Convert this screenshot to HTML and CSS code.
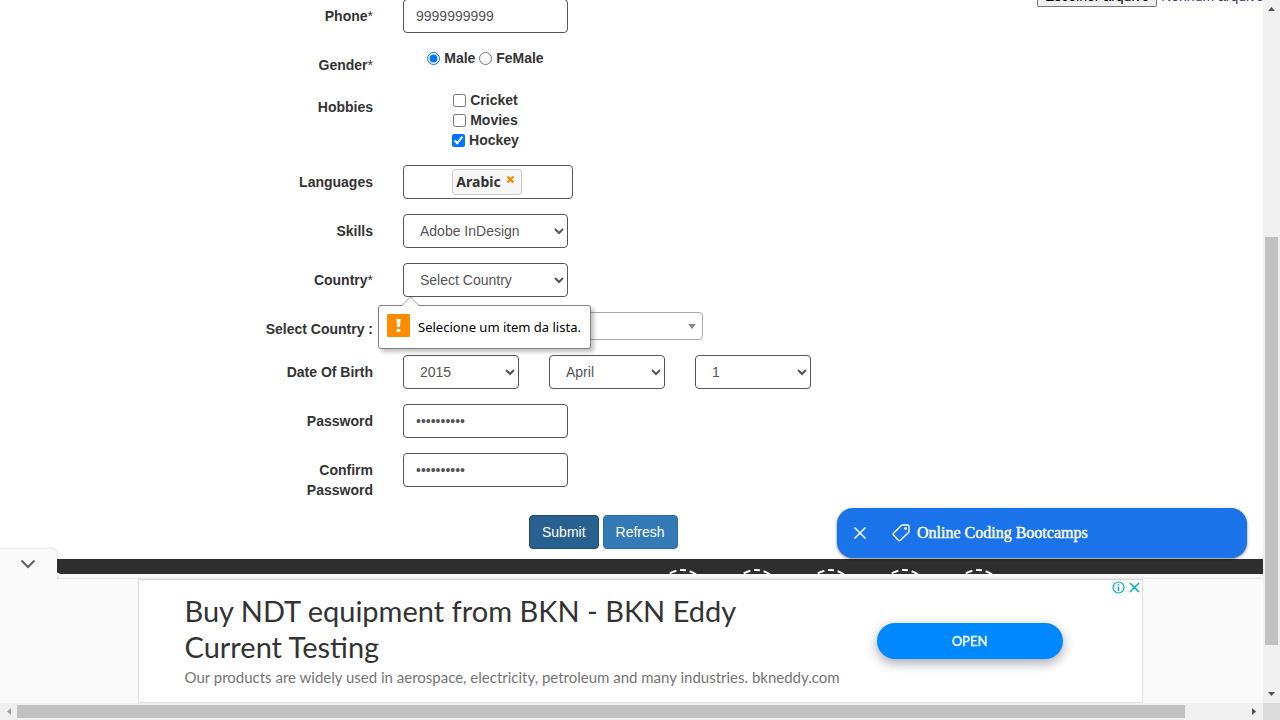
FILE: index.html
```html
<!DOCTYPE html>
<html lang="en">
<head>
<meta charset="utf-8">
<title>Register</title>
<link rel="stylesheet" href="styles.css">
</head>
<body>
<div class="window">
  <div class="viewport">
    <main class="page">
      <div class="content">
        <form class="form">
          <div class="row">
            <label class="label" for="phone">Phone<span class="star">*</span></label>
            <input class="control" id="phone" type="tel" value="9999999999">
          </div>
          <div class="row" role="radiogroup" aria-labelledby="gender">
            <span class="label" id="gender">Gender<span class="star">*</span></span>
            <div class="choices">
              <label><input type="radio" name="gender" checked> Male</label>
              <label><input type="radio" name="gender"> FeMale</label>
            </div>
          </div>
          <div class="row" role="group" aria-labelledby="hobbies">
            <span class="label" id="hobbies">Hobbies</span>
            <div class="choices stacked">
              <label><input type="checkbox"> Cricket</label>
              <label><input type="checkbox"> Movies</label>
              <label><input type="checkbox" checked> Hockey</label>
            </div>
          </div>
          <div class="row">
            <span class="label">Languages</span>
            <div class="tags">
              <span class="tag">Arabic
                <button class="tag-remove" type="button" aria-label="Remove Arabic"><svg width="9" height="9" viewBox="0 0 9 9"><path d="M1.5 1.5l6 6M7.5 1.5l-6 6" stroke="#f08c00" stroke-width="2.4"/></svg></button>
              </span>
            </div>
          </div>
          <div class="row">
            <label class="label" for="skills">Skills</label>
            <select class="control" id="skills"><option>Adobe InDesign</option></select>
          </div>
          <div class="row">
            <label class="label" for="country">Country<span class="star">*</span></label>
            <div class="field">
              <select class="control" id="country"><option>Select Country</option></select>
              <div class="tooltip" role="alert">
                <svg class="tooltip-arrow" width="18" height="10" viewBox="0 0 18 10"><path d="M0 9.5L8.5 1 17 9.5" fill="#fff" stroke="#999"/><path d="M1 9.5h15" stroke="#fff"/></svg>
                <svg class="tooltip-icon" width="23" height="23" viewBox="0 0 23 23"><rect width="23" height="23" rx="1" fill="#ff8c00"/><path d="M9.500 5h4l-.5 8h-3zM9.700 15h3.600v3H9.700z" fill="#fff"/></svg>
                <span>Selecione um item da lista.</span>
              </div>
            </div>
          </div>
          <div class="row">
            <label class="label" for="country2">Select Country :</label>
            <button class="combo" id="country2" type="button"><svg width="8" height="5" viewBox="0 0 8 5"><path d="M0 0h8L4 5z" fill="#888"/></svg></button>
          </div>
          <div class="row">
            <label class="label" for="year">Date Of Birth</label>
            <div class="dates">
              <select class="control" id="year"><option>2015</option></select>
              <select class="control" aria-label="Month"><option>April</option></select>
              <select class="control" aria-label="Day"><option>1</option></select>
            </div>
          </div>
          <div class="row">
            <label class="label" for="pw">Password</label>
            <input class="control" id="pw" type="password" value="abcdefghij">
          </div>
          <div class="row">
            <label class="label" for="pw2">Confirm Password</label>
            <input class="control" id="pw2" type="password" value="abcdefghij">
          </div>
          <div class="actions">
            <button class="btn btn-active" type="submit">Submit</button>
            <button class="btn" type="button">Refresh</button>
          </div>
        </form>
        <div class="upload">
          <button class="upload-button" type="button">Escolher arquivo</button>
          <span class="upload-name">Nenhum arquivo</span>
        </div>
      </div>
      <footer class="footer">
        <svg class="ring" viewBox="0 0 50 50"><use href="#ring"/></svg>
        <svg class="ring" viewBox="0 0 50 50"><use href="#ring"/></svg>
        <svg class="ring" viewBox="0 0 50 50"><use href="#ring"/></svg>
        <svg class="ring" viewBox="0 0 50 50"><use href="#ring"/></svg>
        <svg class="ring" viewBox="0 0 50 50"><circle id="ring" cx="25" cy="25" r="24" fill="none" stroke="#fff" stroke-width="2" stroke-dasharray="7 3.77" stroke-dashoffset="3" transform="rotate(-90 25 25)"/></svg>
      </footer>
      <div class="promo">
        <button class="promo-close" type="button" aria-label="Close"><svg width="12" height="12" viewBox="0 0 12 12"><path d="M.5.5l11 11M11.5.5l-11 11" stroke="#fff" stroke-width="1.5"/></svg></button>
        <a class="promo-link" href="#"><svg width="18" height="18" viewBox="0 0 18 18" fill="none" stroke="#fff" stroke-width="1.4" stroke-linejoin="round"><path d="M9.300 1.500Q9.800 1 10.500 1H15.500Q17 1 17 2.500V7.300Q17 8 16.500 8.500L8.500 16.300Q7.500 17 6.500 16.200L1.600 11.300Q.8 10.200 1.600 9.200z"/><circle cx="13.500" cy="4.500" r=".7" fill="#fff"/></svg>Online Coding Bootcamps</a>
      </div>
    </main>
    <aside class="dock">
      <button class="dock-toggle" type="button" aria-label="Hide"><svg width="16" height="10" viewBox="0 0 16 10"><path d="M1.500 1.500L8 8l6.500-6.500" fill="none" stroke="#616161" stroke-width="2"/></svg></button>
      <div class="ad-area">
        <div class="ad">
          <div class="ad-text">
            <h2 class="ad-title">Buy NDT equipment from BKN - BKN Eddy Current Testing</h2>
            <p class="ad-body">Our products are widely used in aerospace, electricity, petroleum and many industries. bkneddy.com</p>
          </div>
          <a class="ad-open" href="#">OPEN</a>
          <div class="ad-marks"><svg width="28" height="13" viewBox="0 0 28 13" fill="none" stroke="#00aecd"><circle cx="6.500" cy="6.500" r="5.500" stroke-width="1.200"/><path d="M6.500 5.500V10M6.500 3v1.500" stroke-width="1.500"/><path d="M18 2l9 9M27 2l-9 9" stroke-width="1.500"/></svg></div>
        </div>
      </div>
    </aside>
  </div>
  <div class="bar bar-v"><svg width="7" height="4" viewBox="0 0 7 4"><path d="M0 4h7L3.500 0z" fill="#505050"/></svg><div class="track-v"><div class="thumb-v"></div></div><svg width="7" height="4" viewBox="0 0 7 4"><path d="M0 0h7L3.500 4z" fill="#505050"/></svg></div>
  <div class="bar bar-h"><svg width="4" height="7" viewBox="0 0 4 7"><path d="M4 0v7L0 3.500z" fill="#a3a3a3"/></svg><div class="track-h"><div class="thumb-h"></div></div><svg width="4" height="7" viewBox="0 0 4 7"><path d="M0 0v7l4-3.500z" fill="#505050"/></svg></div>
  <div class="corner"></div>
</div>
</body>
</html>
```

FILE: styles.css
```css
* { box-sizing: border-box; }
body {
  margin: 0;
  font: 14px/20px "Liberation Sans", Arial, sans-serif;
  color: #333;
  background: #fff;
}
button, input, select { font: inherit; }
svg { display: block; flex: none; }
.window {
  display: grid;
  grid-template: minmax(0, 1fr) 17px / minmax(0, 1fr) 17px;
  height: 100vh;
}
.viewport { display: flex; flex-direction: column; overflow: hidden; }

.page {
  position: relative;
  flex: 1;
  min-height: 0;
  display: flex;
  flex-direction: column;
  overflow: hidden;
}
/* the page is scrolled down, so its top rows are cut off */
.content {
  flex: 1;
  min-height: 0;
  display: flex;
  justify-content: space-between;
  margin-top: -16px;
}
.form {
  display: flex;
  flex-direction: column;
  gap: 15px;
  padding: 15px 0 10px 252px;
}
.row { display: flex; align-items: flex-start; gap: 30px; }
.label {
  width: 121px;
  padding-top: 7px;
  text-align: right;
  font-weight: bold;
}
.star { font-weight: normal; }
.control {
  width: 165px;
  height: 34px;
  padding: 6px 12px;
  border: 1px solid #555;
  border-radius: 4px;
  background: #fff;
  color: #555;
}
select.control { padding-right: 0; }
.field { position: relative; }
.choices { width: 165px; text-align: center; font-weight: bold; }
.choices input { width: 13px; height: 13px; margin: 0; vertical-align: -2px; }
.stacked label { display: block; }
.tags {
  display: flex;
  justify-content: center;
  align-items: center;
  width: 170px;
  height: 34px;
  border: 1px solid #555;
  border-radius: 4px;
  padding-right: 2px;
}
.tag {
  display: flex;
  gap: 5px;
  height: 26px;
  padding: 2px 6px 2px 3px;
  border: 1px solid #ccc;
  border-radius: 3px;
  background: #f6f6f6;
  font-family: "Noto Sans", sans-serif;
  font-weight: bold;
}
.tag-remove { align-self: flex-start; margin-top: 3px; padding: 0; border: 0; background: none; }
.combo {
  display: flex;
  align-items: center;
  justify-content: flex-end;
  width: 300px;
  height: 28px;
  padding: 0 6px;
  border: 1px solid #aaa;
  border-radius: 4px;
  background: #fff;
}
.dates { display: flex; gap: 30px; }
.dates .control { width: 116px; }
.actions { display: flex; gap: 4px; padding-left: 277px; }
.btn {
  height: 34px;
  padding: 6px 12px;
  border: 1px solid #2e6da4;
  border-radius: 4px;
  background: #337ab7;
  color: #fff;
}
.btn-active { background: #286090; border-color: #204d74; }

.tooltip {
  position: absolute;
  z-index: 2;
  top: 42px;
  left: -25px;
  display: flex;
  align-items: center;
  gap: 8px;
  height: 44px;
  padding: 0 9px 0 8px;
  border: 1px solid #808080;
  border-radius: 3px;
  background: #fff;
  box-shadow: 3px 3px 4px rgba(0, 0, 0, .25);
  color: #000;
  font: 13px/20px "Noto Sans", sans-serif;
  white-space: nowrap;
}
.tooltip-arrow { position: absolute; top: -10px; left: 23px; }
.tooltip-icon { margin-bottom: 4px; }

.upload { width: 226px; padding-top: 1px; white-space: nowrap; overflow: hidden; }
.upload-button {
  height: 22px;
  padding: 0 7px;
  border: 1px solid #767676;
  border-radius: 2px;
  background: #efefef;
  color: #000;
}
.upload-name { color: #336; }

.footer {
  display: flex;
  justify-content: flex-end;
  gap: 24px;
  height: 15px;
  margin-left: 56px;
  padding: 10px 260px 0 0;
  overflow: hidden;
  border-bottom-left-radius: 5px;
  background: #2e2e2e;
}
.ring { width: 50px; height: 50px; }

.promo {
  position: absolute;
  right: 16px;
  bottom: 16px;
  display: flex;
  align-items: center;
  gap: 26px;
  width: 410px;
  height: 50px;
  padding: 0 17px;
  border-radius: 16px;
  background: #1a73e8;
  box-shadow: 0 1px 3px rgba(0, 0, 0, .5);
}
.promo-close { padding: 0; border: 0; background: none; }
.promo-link {
  display: flex;
  align-items: center;
  gap: 7px;
  color: #fff;
  font: 16px/20px "Liberation Serif", "Times New Roman", serif;
  -webkit-text-stroke: 0.4px #fff;
  text-decoration: none;
}

.dock { position: relative; padding-top: 5px; background: #fafafa; }
.dock-toggle {
  position: absolute;
  top: -25px;
  left: 0;
  display: flex;
  align-items: center;
  justify-content: center;
  width: 57px;
  height: 30px;
  padding: 0 1px 0 0;
  border: 0;
  border-radius: 0 5px 0 0;
  background: #fafafa;
  box-shadow: 0 0 2px rgba(0, 0, 0, .3);
  clip-path: inset(-3px -3px 0 0);
}
.ad-area {
  padding-left: 17px;
  box-shadow: 0 -1px 2px rgba(0, 0, 0, .1);
}
.ad {
  position: relative;
  display: flex;
  align-items: center;
  justify-content: space-between;
  width: 1005px;
  max-width: 100%;
  height: 124px;
  margin: 0 auto;
  padding: 0 79px 2px 46px;
  border: 1px solid #e0e0e0;
  border-top-color: #d4d4d4;
  background: #fff;
}
.ad-text { width: 670px; }
.ad-title {
  max-width: 600px;
  margin: 0;
  font: 29px/36px Lato, sans-serif;
}
.ad-body {
  margin: 0;
  padding-top: 2px;
  color: #757575;
  font: 15px/20px Lato, sans-serif;
  white-space: nowrap;
}
.ad-open {
  width: 186px;
  height: 36px;
  margin-top: 2px;
  border-radius: 18px;
  background: #08f;
  box-shadow: 0 4px 12px rgba(30, 30, 60, .4);
  color: #fff;
  font: 13px/36px Lato, sans-serif;
  -webkit-text-stroke: 0.3px #fff;
  text-align: center;
  text-decoration: none;
}
.ad-marks { position: absolute; top: 1px; right: 2px; }

.bar { display: flex; align-items: center; background: #f0f0f0; }
.bar-v { flex-direction: column; padding: 7px 0; }
.track-v { flex: 1; width: 13px; margin: 6px 0; }
.thumb-v { height: 61%; margin-top: 220px; background: #c1c1c1; }
.bar-h { padding: 0 7px; }
.track-h { flex: 1; height: 13px; margin: 0 6px; }
.thumb-h { width: 95%; height: 100%; background: #c1c1c1; }
.corner { background: #dcdcdc; }
```
